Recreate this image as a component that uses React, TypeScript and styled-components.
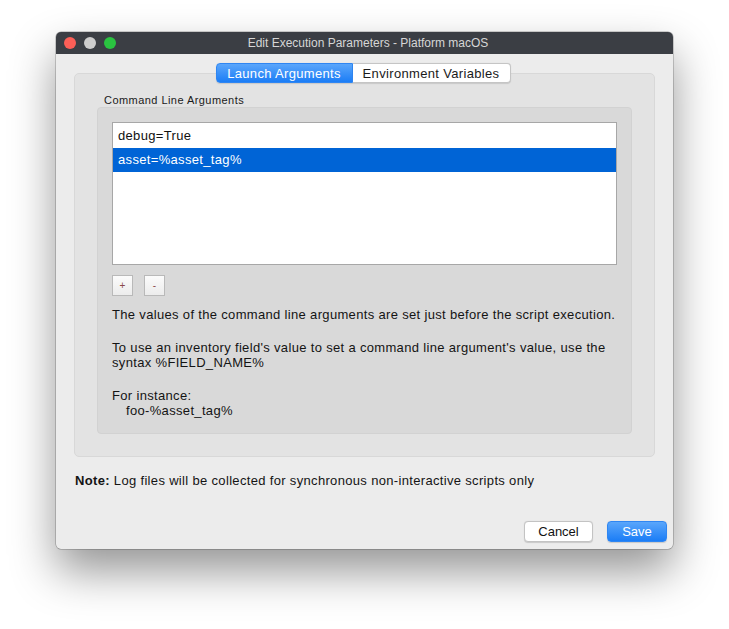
import React from "react";
import styled, { createGlobalStyle } from "styled-components";

const Global = createGlobalStyle`
  html, body { margin: 0; padding: 0; background: #ffffff; }
  body { font-family: "Liberation Sans", Arial, sans-serif; -webkit-font-smoothing: antialiased; }
  * { box-sizing: border-box; }
`;

const Page = styled.div`
  width: 729px;
  height: 629px;
  padding: 32px 0 0 56px;
`;

const Window = styled.div`
  width: 617px;
  height: 517px;
  border-radius: 5px;
  background: #ececec;
  box-shadow: 0 22px 45px rgba(0, 0, 0, 0.42), 0 0 0 0.5px rgba(0, 0, 0, 0.35);
  display: flex;
  flex-direction: column;
  overflow: hidden;
`;

const TitleBar = styled.div`
  height: 22px;
  background: #3b3e44;
  display: flex;
  align-items: center;
  position: relative;
  flex-shrink: 0;
`;

const Lights = styled.div`
  display: flex;
  gap: 8px;
  padding-left: 8px;
`;

const Light = styled.span<{ $c: string }>`
  width: 12px;
  height: 12px;
  border-radius: 50%;
  background: ${(p) => p.$c};
`;

const Title = styled.div`
  position: absolute;
  left: 0;
  right: 0;
  text-align: center;
  font-size: 12px;
  color: #d6d6d6;
  pointer-events: none;
  padding-left: 7px;
`;

const Body = styled.div`
  flex: 1;
  display: flex;
  flex-direction: column;
  padding: 9px 18px 7px 18px;
  font-size: 13px;
  letter-spacing: 0.33px;
  color: #141414;
`;

const Tabs = styled.div`
  display: flex;
  justify-content: center;
  position: relative;
  z-index: 1;
  height: 20px;
  padding-right: 3px;
`;

const Tab = styled.div<{ $active?: boolean }>`
  height: 20px;
  display: flex;
  align-items: center;
  justify-content: center;
  font-size: 13px;
  width: ${(p) => (p.$active ? "137px" : "158px")};
  color: ${(p) => (p.$active ? "#ffffff" : "#1a1a1a")};
  background: ${(p) =>
    p.$active ? "linear-gradient(#5aa6fb, #1b7df6)" : "#ffffff"};
  border: 1px solid ${(p) => (p.$active ? "#2f86f2" : "#c5c5c5")};
  border-radius: ${(p) => (p.$active ? "4px 0 0 4px" : "0 4px 4px 0")};
  border-left-width: ${(p) => (p.$active ? "1px" : "0")};
  box-shadow: 0 0.5px 1px rgba(0, 0, 0, 0.12);
`;

const Group = styled.div`
  margin-top: -10px;
  height: 384px;
  background: #e3e3e3;
  border: 1px solid #d8d8d8;
  border-radius: 5px;
  padding: 19px 22px 22px 22px;
  display: flex;
  flex-direction: column;
`;

const GroupLabel = styled.div`
  font-size: 11px;
  letter-spacing: 0.45px;
  color: #1a1a1a;
  padding-left: 7px;
  height: 14px;
  line-height: 14px;
`;

const Inner = styled.div`
  flex: 1;
  background: #d9d9d9;
  border: 1px solid #d2d2d2;
  border-radius: 4px;
  padding: 14px 14px 0 14px;
  display: flex;
  flex-direction: column;
`;

const List = styled.div`
  height: 143px;
  background: #ffffff;
  border: 1px solid #a7a7a7;
  padding-top: 1px;
  display: flex;
  flex-direction: column;
`;

const Row = styled.div<{ $selected?: boolean }>`
  height: 24px;
  line-height: 24px;
  padding-left: 5px;
  font-size: 13px;
  color: ${(p) => (p.$selected ? "#ffffff" : "#111111")};
  background: ${(p) => (p.$selected ? "#0064d6" : "transparent")};
`;

const ButtonRow = styled.div`
  display: flex;
  gap: 11px;
  margin-top: 10px;
`;

const SmallButton = styled.div`
  width: 21px;
  height: 21px;
  border: 1px solid #b9b9b9;
  background: linear-gradient(#fbfbfb, #ececec);
  font-size: 10px;
  color: #8a4a4a;
  display: flex;
  align-items: center;
  justify-content: center;
`;

const Text = styled.div`
  margin-top: 11px;
  line-height: 15px;
  display: flex;
  flex-direction: column;
  gap: 18px;
`;

const Para = styled.p`
  margin: 0;
  white-space: nowrap;
`;

const Indent = styled.span`
  padding-left: 14px;
`;

const Note = styled.div`
  margin-top: 16px;
  padding-left: 1px;
  line-height: 15px;
  b { font-weight: bold; }
`;

const Footer = styled.div`
  margin-top: auto;
  display: flex;
  justify-content: flex-end;
  gap: 14px;
  margin-right: -12px;
`;

const PushButton = styled.div<{ $primary?: boolean }>`
  height: 21px;
  width: ${(p) => (p.$primary ? "60px" : "69px")};
  border-radius: 4px;
  letter-spacing: 0;
  display: flex;
  align-items: center;
  justify-content: center;
  color: ${(p) => (p.$primary ? "#ffffff" : "#111111")};
  background: ${(p) => (p.$primary ? "linear-gradient(#5aa6fb, #1b7df6)" : "#ffffff")};
  border: 1px solid ${(p) => (p.$primary ? "#2f86f2" : "#c3c3c3")};
  box-shadow: 0 0.5px 1px rgba(0, 0, 0, 0.15);
`;

export default function App() {
  return (
    <Page>
      <Global />
      <Window>
        <TitleBar>
          <Lights>
            <Light $c="#fc5f57" />
            <Light $c="#cdcdcd" />
            <Light $c="#2ac340" />
          </Lights>
          <Title>Edit Execution Parameters - Platform macOS</Title>
        </TitleBar>
        <Body>
          <Tabs>
            <Tab $active>Launch Arguments</Tab>
            <Tab>Environment Variables</Tab>
          </Tabs>
          <Group>
            <GroupLabel>Command Line Arguments</GroupLabel>
            <Inner>
              <List>
                <Row>debug=True</Row>
                <Row $selected>asset=%asset_tag%</Row>
              </List>
              <ButtonRow>
                <SmallButton>+</SmallButton>
                <SmallButton>-</SmallButton>
              </ButtonRow>
              <Text>
                <Para>The values of the command line arguments are set just before the script execution.</Para>
                <Para>
                  To use an inventory field's value to set a command line argument's value, use the
                  <br />
                  syntax %FIELD_NAME%
                </Para>
                <Para>
                  For instance:
                  <br />
                  <Indent>foo-%asset_tag%</Indent>
                </Para>
              </Text>
            </Inner>
          </Group>
          <Note>
            <b>Note:</b> Log files will be collected for synchronous non-interactive scripts only
          </Note>
          <Footer>
            <PushButton>Cancel</PushButton>
            <PushButton $primary>Save</PushButton>
          </Footer>
        </Body>
      </Window>
    </Page>
  );
}
